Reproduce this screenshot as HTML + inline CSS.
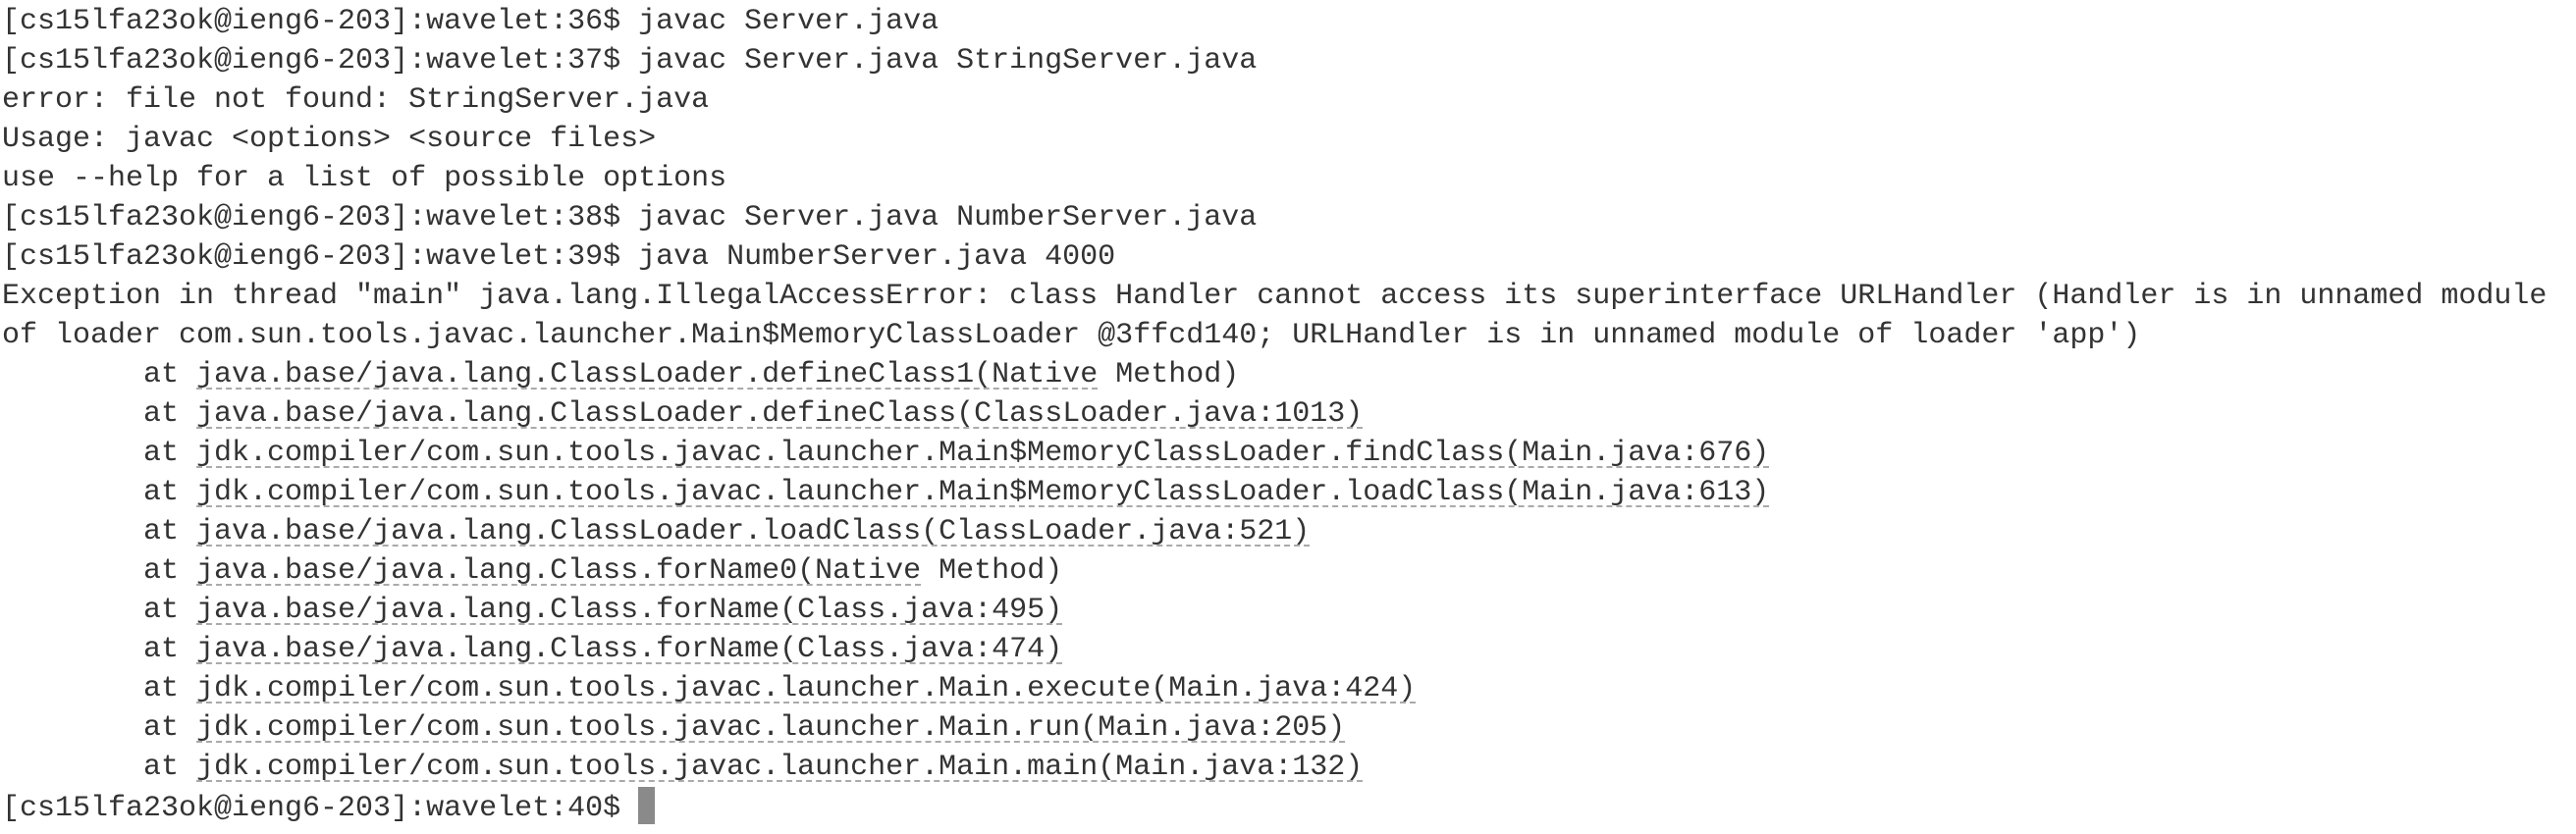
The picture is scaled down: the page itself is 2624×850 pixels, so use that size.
<!DOCTYPE html>
<html><head><meta charset="utf-8"><style>
html,body{margin:0;padding:0;background:#fff;width:2624px;height:850px;overflow:hidden}
pre{margin:0;padding:2px 0 0 2px;font-family:"Liberation Mono","DejaVu Sans Mono",monospace;font-size:30px;line-height:40px;color:#333;tab-size:8;white-space:pre}
u{text-decoration:underline dashed #aaa 2px;text-underline-offset:6px}
.cur{display:inline-block;width:17px;height:38px;background:#8a8a8a;vertical-align:-9px}
</style></head><body><pre>[cs15lfa23ok@ieng6-203]:wavelet:36$ javac Server.java
[cs15lfa23ok@ieng6-203]:wavelet:37$ javac Server.java StringServer.java
error: file not found: StringServer.java
Usage: javac &lt;options&gt; &lt;source files&gt;
use --help for a list of possible options
[cs15lfa23ok@ieng6-203]:wavelet:38$ javac Server.java NumberServer.java
[cs15lfa23ok@ieng6-203]:wavelet:39$ java NumberServer.java 4000
Exception in thread "main" java.lang.IllegalAccessError: class Handler cannot access its superinterface URLHandler (Handler is in unnamed module
of loader com.sun.tools.javac.launcher.Main$MemoryClassLoader @3ffcd140; URLHandler is in unnamed module of loader 'app')
        at <u>java.base/java.lang.ClassLoader.defineClass1(Native</u> Method)
        at <u>java.base/java.lang.ClassLoader.defineClass(ClassLoader.java:1013)</u>
        at <u>jdk.compiler/com.sun.tools.javac.launcher.Main$MemoryClassLoader.findClass(Main.java:676)</u>
        at <u>jdk.compiler/com.sun.tools.javac.launcher.Main$MemoryClassLoader.loadClass(Main.java:613)</u>
        at <u>java.base/java.lang.ClassLoader.loadClass(ClassLoader.java:521)</u>
        at <u>java.base/java.lang.Class.forName0(Native</u> Method)
        at <u>java.base/java.lang.Class.forName(Class.java:495)</u>
        at <u>java.base/java.lang.Class.forName(Class.java:474)</u>
        at <u>jdk.compiler/com.sun.tools.javac.launcher.Main.execute(Main.java:424)</u>
        at <u>jdk.compiler/com.sun.tools.javac.launcher.Main.run(Main.java:205)</u>
        at <u>jdk.compiler/com.sun.tools.javac.launcher.Main.main(Main.java:132)</u>
[cs15lfa23ok@ieng6-203]:wavelet:40$ <span class="cur"></span></pre></body></html>
